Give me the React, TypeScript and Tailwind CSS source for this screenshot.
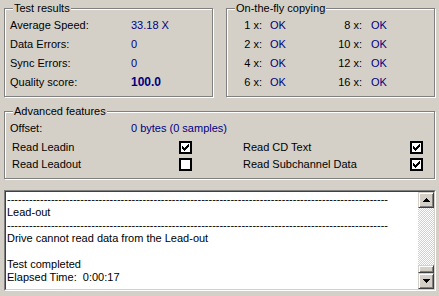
import React from "react";

const navy = "text-[#000080]";

function GroupBox({
  title,
  className,
  children,
}: {
  title: string;
  className?: string;
  children: React.ReactNode;
}) {
  return (
    <div
      className={`relative border border-[#808080] shadow-[1px_1px_0_#ffffff,inset_1px_1px_0_#ffffff] ${className ?? ""}`}
    >
      <span className="absolute left-[8px] top-[-7px] bg-[#d4d0c8] px-[1px] leading-[13px] text-black">
        {title}
      </span>
      {children}
    </div>
  );
}

function Check({ checked }: { checked: boolean }) {
  return (
    <div className="flex h-[13px] w-[13px] items-center justify-center border-2 border-black bg-white">
      {checked && (
        <svg width="7" height="7" viewBox="0 0 7 7" shapeRendering="crispEdges">
          <path
            d="M6 0h1v1H6zM5 1h2v1H5zM0 2h1v1H0zM4 2h3v1H4zM0 3h2v1H0zM3 3h3v1H3zM0 4h5v1H0zM1 5h3v1H1zM2 6h1v1H2z"
            fill="#000"
          />
        </svg>
      )}
    </div>
  );
}

function ScrollButton({ up }: { up: boolean }) {
  return (
    <div className="flex h-[16px] w-[16px] items-center justify-center border border-t-[#d4d0c8] border-l-[#d4d0c8] border-r-[#404040] border-b-[#404040] bg-[#d4d0c8] shadow-[inset_1px_1px_0_#ffffff,inset_-1px_-1px_0_#808080]">
      <svg width="7" height="4" viewBox="0 0 7 4" shapeRendering="crispEdges">
        <path d={up ? "M3 0h1v1H3zM2 1h3v1H2zM1 2h5v1H1zM0 3h7v1H0z" : "M0 0h7v1H0zM1 1h5v1H1zM2 2h3v1H2zM3 3h1v1H3z"} fill="#000" />
      </svg>
    </div>
  );
}

const copying = [
  ["1 x:", "8 x:"],
  ["2 x:", "10 x:"],
  ["4 x:", "12 x:"],
  ["6 x:", "16 x:"],
];

const dashes = "-".repeat(104);

const logLines = [
  dashes,
  "Lead-out",
  dashes,
  "Drive cannot read data from the Lead-out",
  "\u00a0",
  "Test completed",
  "Elapsed Time:\u00a0 0:00:17",
];

export default function App() {
  return (
    <div
      className="h-[296px] w-[439px] overflow-hidden bg-[#d4d0c8] pl-[4px] pt-[8px] text-[11px] text-black"
      style={{ fontFamily: '"Liberation Sans", Arial, sans-serif' }}
    >
      <div className="flex gap-[13px]">
        <GroupBox title="Test results" className="h-[89px] w-[209px]">
          <div className="grid grid-cols-[121px_1fr] pl-[5px] pt-[7px] leading-[19px]">
            <span>Average Speed:</span>
            <span className={navy}>33.18 X</span>
            <span>Data Errors:</span>
            <span className={navy}>0</span>
            <span>Sync Errors:</span>
            <span className={navy}>0</span>
            <span>Quality score:</span>
            <span className={`${navy} text-[12px] font-bold`}>100.0</span>
          </div>
        </GroupBox>
        <GroupBox title="On-the-fly copying" className="h-[89px] w-[209px]">
          <div className="grid grid-cols-[35px_64px_36px_1fr] pt-[7px] leading-[19px]">
            {copying.map(([a, b]) => (
              <React.Fragment key={a}>
                <span className="text-right">{a}</span>
                <span className={`${navy} pl-[8px]`}>OK</span>
                <span className="text-right">{b}</span>
                <span className={`${navy} pl-[9px]`}>OK</span>
              </React.Fragment>
            ))}
          </div>
        </GroupBox>
      </div>

      <GroupBox title="Advanced features" className="mt-[14px] h-[68px] w-[431px]">
        <div className="flex pl-[5px] pt-[9px] leading-[15px]">
          <span className="w-[121px]">Offset:</span>
          <span className={navy}>0 bytes (0 samples)</span>
        </div>
        <div className="grid grid-cols-[180px_180px] gap-x-[51px] pl-[7px] pt-[3px] leading-[17px]">
          <div className="flex h-[17px] items-center justify-between">
            <span>Read Leadin</span>
            <Check checked />
          </div>
          <div className="flex h-[17px] items-center justify-between">
            <span>Read CD Text</span>
            <Check checked />
          </div>
          <div className="flex h-[17px] items-center justify-between">
            <span>Read Leadout</span>
            <Check checked={false} />
          </div>
          <div className="flex h-[17px] items-center justify-between">
            <span>Read Subchannel Data</span>
            <Check checked />
          </div>
        </div>
      </GroupBox>

      <div className="mt-[11px] flex h-[101px] w-[432px] border border-t-[#808080] border-l-[#808080] border-r-white border-b-white">
        <div className="flex flex-1 border border-t-[#404040] border-l-[#404040] border-r-[#d4d0c8] border-b-[#d4d0c8] bg-white">
          <div className="flex-1 overflow-hidden whitespace-nowrap pl-[1px] pt-[1px] leading-[13px]">
            {logLines.map((line, i) => (
              <div key={i}>{line}</div>
            ))}
          </div>
          <div className="flex w-[16px] flex-col">
            <ScrollButton up />
            <div className="flex-1 bg-[repeating-conic-gradient(#d4d0c8_0%_25%,#ffffff_0%_50%)] bg-size-[2px_2px]" />
            <div className="h-[8px] w-[16px] border border-t-[#d4d0c8] border-l-[#d4d0c8] border-r-[#404040] border-b-[#404040] bg-[#d4d0c8] shadow-[inset_1px_1px_0_#ffffff,inset_-1px_-1px_0_#808080]" />
            <ScrollButton up={false} />
          </div>
        </div>
      </div>
    </div>
  );
}
